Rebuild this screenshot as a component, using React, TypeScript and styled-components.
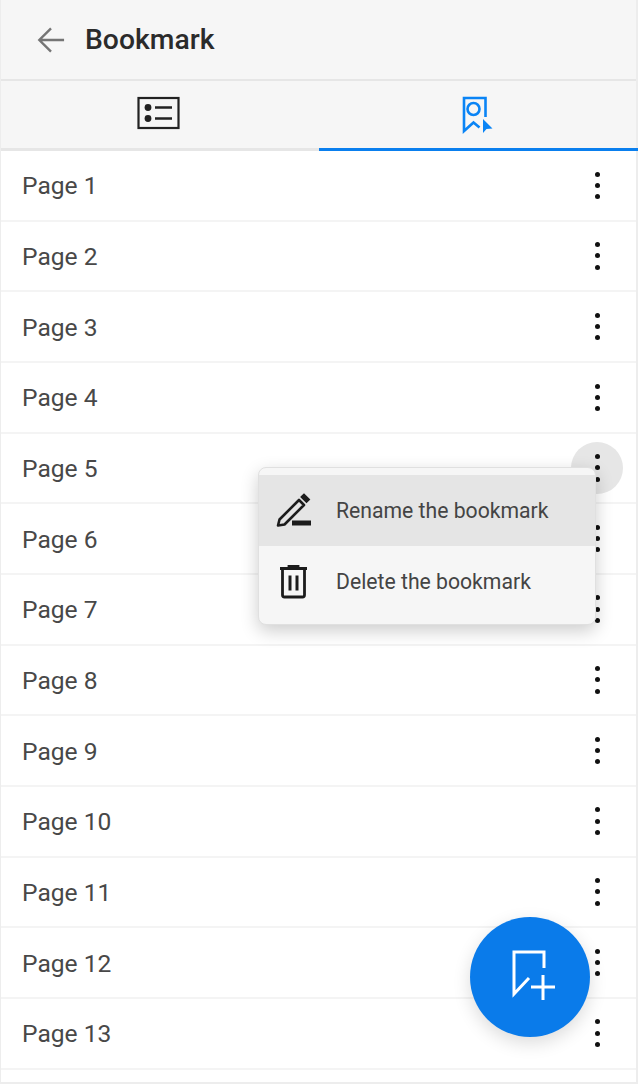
import React from "react"
import styled, { createGlobalStyle } from "styled-components"

const GlobalStyle = createGlobalStyle`
  html, body {
    margin: 0;
    padding: 0;
    background: #fff;
    font-family: Roboto, "Liberation Sans", sans-serif;
  }
`

const Frame = styled.div`
  position: relative;
  box-sizing: border-box;
  width: 638px;
  height: 1084px;
  border-left: 1px solid #ededed;
  border-right: 2px solid #ededed;
  border-bottom: 2px solid #ededed;
`

const Header = styled.header`
  display: flex;
  align-items: center;
  box-sizing: border-box;
  height: 81px;
  padding: 0 0 0 36px;
  gap: 20px;
  background: #f6f6f6;
  border-bottom: 2px solid #e6e6e6;
`

const BackIcon = styled.svg`
  width: 28px;
  height: 28px;
  flex: none;
`

const Title = styled.h1`
  margin: 0;
  font-size: 28.3px;
  font-weight: 500;
  color: #2b2b2b;
`

const Tabs = styled.nav`
  display: flex;
  height: 70px;
  background: #f6f6f6;
`

const Tab = styled.div<{ $active?: boolean }>`
  flex: 1;
  display: flex;
  align-items: center;
  justify-content: center;
  box-sizing: border-box;
  padding: ${p => (p.$active ? "0 2px 3px 0" : "0 0 3px")};
  margin-right: ${p => (p.$active ? "-2px" : "0")};
  border-bottom: ${p => (p.$active ? "3px solid #0a7fee" : "3px solid #e6e6e6")};
`

const ListIcon = styled.svg`
  width: 44px;
  height: 34px;
  margin-right: 1px;
`

const RibbonIcon = styled.svg`
  width: 31px;
  height: 38px;
  margin-top: 4px;
`

const List = styled.ul`
  margin: 0;
  padding: 0;
  list-style: none;
`

const Row = styled.li`
  display: flex;
  align-items: center;
  justify-content: space-between;
  box-sizing: border-box;
  height: 70.67px;
  padding: 0 13px 0 21px;
  border-bottom: 2px solid #f4f4f4;
`

const RowLabel = styled.span`
  font-size: 24.6px;
  color: #484848;
  padding-top: 1px;
`

const MoreButton = styled.div<{ $open?: boolean }>`
  display: flex;
  flex-direction: column;
  align-items: center;
  justify-content: center;
  gap: 6.3px;
  width: 52px;
  height: 52px;
  border-radius: 50%;
  background: ${p => (p.$open ? "#e6e6e6" : "transparent")};
`

const Dot = styled.span`
  width: 5px;
  height: 5px;
  border-radius: 50%;
  background: #111;
`

const Menu = styled.div`
  position: absolute;
  left: 257px;
  top: 467px;
  width: 338px;
  box-sizing: border-box;
  padding: 7px 0;
  background: #f6f6f6;
  border: 1px solid #e0e0e0;
  border-radius: 8px;
  box-shadow: 0 6px 18px rgba(0, 0, 0, 0.2);
`

const MenuItem = styled.div<{ $hover?: boolean }>`
  display: flex;
  align-items: center;
  height: 71px;
  padding-left: 17px;
  gap: 24px;
  background: ${p => (p.$hover ? "#e5e5e5" : "transparent")};
`

const MenuIcon = styled.svg`
  width: 36px;
  height: 36px;
  flex: none;
`

const MenuLabel = styled.span`
  font-size: 21.2px;
  color: #444;
`

const Fab = styled.div`
  position: absolute;
  left: 469px;
  top: 917px;
  width: 120px;
  height: 120px;
  display: flex;
  align-items: center;
  justify-content: center;
  border-radius: 50%;
  background: #0a7bea;
  box-shadow: 0 6px 18px rgba(0, 0, 0, 0.14);
`

const FabIcon = styled.svg`
  width: 44px;
  height: 50px;
  margin: 0 0 4px 8px;
`

const pages = Array.from({ length: 13 }, (_, i) => `Page ${i + 1}`)

const App = () => (
  <Frame>
    <GlobalStyle />
    <Header>
      <BackIcon viewBox="0 0 30 30" fill="none" stroke="#757575" strokeWidth="2.6">
        <path d="M29 15H3M15 2.5 2.5 15 15 27.5" />
      </BackIcon>
      <Title>Bookmark</Title>
    </Header>
    <Tabs>
      <Tab>
        <ListIcon viewBox="0 0 44 34" fill="none" stroke="#222">
          <rect x="1.5" y="2" width="40" height="30" strokeWidth="2.2" />
          <circle cx="11" cy="11.5" r="3.4" fill="#222" stroke="none" />
          <circle cx="11" cy="22.5" r="3.4" fill="#222" stroke="none" />
          <path d="M18 11.5h17M18 22.5h17" strokeWidth="2.4" />
        </ListIcon>
      </Tab>
      <Tab $active>
        <RibbonIcon viewBox="0 0 31 38" fill="none" stroke="#0a84f5" strokeWidth="2.6">
          <path d="M23.5 21V2H2v33l9.5-8.5 6 5" />
          <circle cx="11.5" cy="13" r="6" />
          <path d="M21 23v14l3.5-4 6-.5z" fill="#0a84f5" stroke="none" />
        </RibbonIcon>
      </Tab>
    </Tabs>
    <List>
      {pages.map((page, i) => (
        <Row key={page}>
          <RowLabel>{page}</RowLabel>
          <MoreButton $open={i === 4}>
            <Dot />
            <Dot />
            <Dot />
          </MoreButton>
        </Row>
      ))}
    </List>
    <Menu>
      <MenuItem $hover>
        <MenuIcon viewBox="0 0 36 36" fill="none" stroke="#1c1c1c" strokeWidth="2.6">
          <path d="M2 32.5l1.5-6L23 7l5 5-19.500 19.500z" strokeLinejoin="round" />
          <path d="M26 4l2-2 4.500 4.500-2 2z" fill="#1c1c1c" />
          <path d="M16 30h19" strokeWidth="5" />
        </MenuIcon>
        <MenuLabel>Rename the bookmark</MenuLabel>
      </MenuItem>
      <MenuItem>
        <MenuIcon viewBox="0 0 36 36" fill="none" stroke="#1c1c1c" strokeWidth="2.8">
          <path d="M4 4.500h27M13 4V2.500h9V4" />
          <path d="M6.500 5v26a2 2 0 0 0 2 2h18a2 2 0 0 0 2-2V5" />
          <path d="M14 11.500v15M21 11.500v15" strokeWidth="3" />
        </MenuIcon>
        <MenuLabel>Delete the bookmark</MenuLabel>
      </MenuItem>
    </Menu>
    <Fab>
      <FabIcon viewBox="0 0 44 50" fill="none" stroke="#fff" strokeWidth="3">
        <path d="M32 18V2H2v42l15-16" />
        <path d="M19 37h24M31 25v25" />
      </FabIcon>
    </Fab>
  </Frame>
)

export default App
